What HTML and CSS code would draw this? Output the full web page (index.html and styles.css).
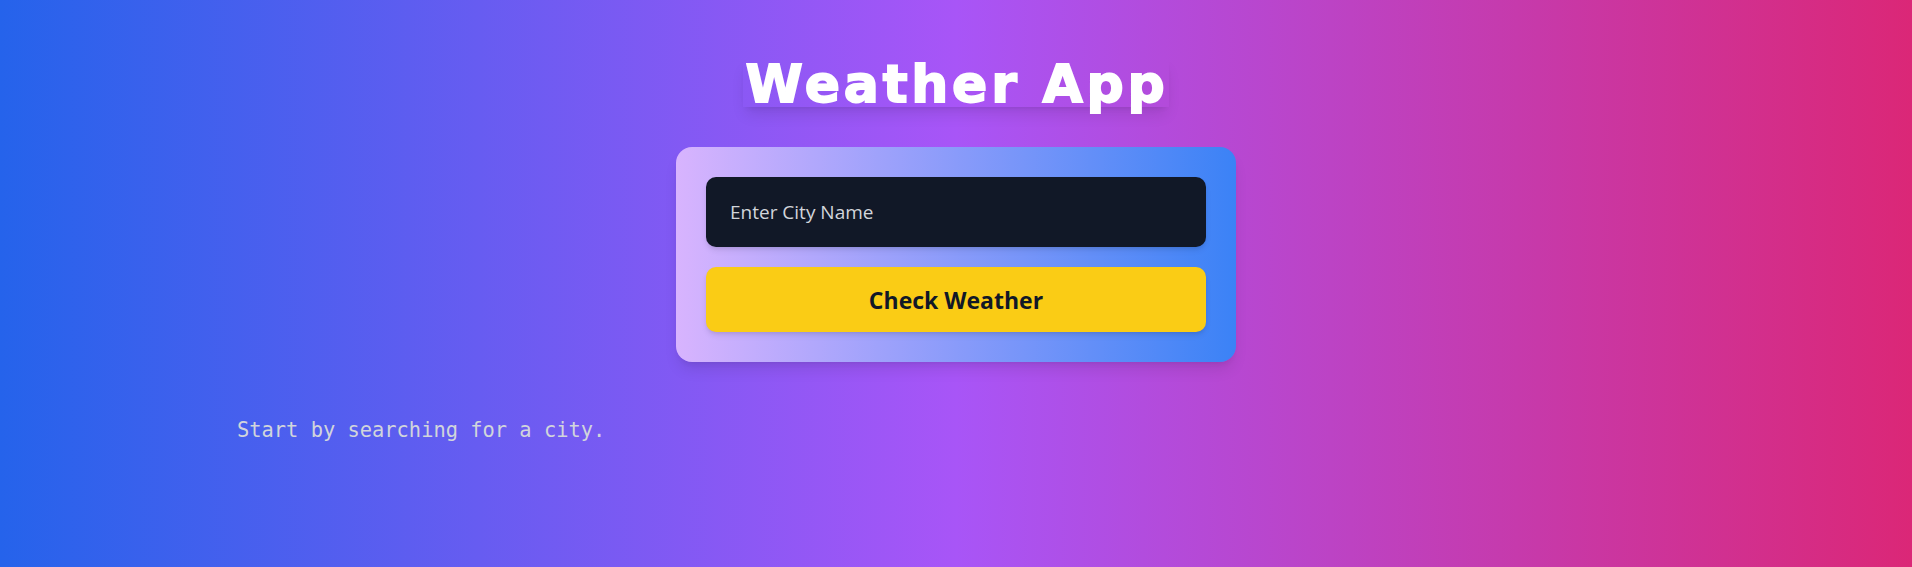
FILE: index.html
```html
<!DOCTYPE html>
<html lang="en">
<head>
<meta charset="utf-8">
<title>Weather App</title>
<link rel="stylesheet" href="styles.css">
</head>
<body>
<main class="app">
  <h1 class="title">Weather App</h1>
  <form class="card" onsubmit="return false;">
    <input class="city-input" type="text" placeholder="Enter City Name">
    <button class="check-btn" type="submit">Check Weather</button>
  </form>
  <p class="status">Start by searching for a city.</p>
</main>
</body>
</html>
```

FILE: styles.css
```css
* { box-sizing: border-box; }
html, body { margin: 0; padding: 0; }
body {
  min-height: 100vh;
  background: linear-gradient(to right, #2563eb, #a855f7, #db2777);
  font-family: "Open Sans", "Noto Sans", sans-serif;
}
.app {
  display: flex;
  flex-direction: column;
  align-items: center;
  padding-top: 58px;
}
.title {
  margin: 0 0 40px;
  padding: 3px 0 0 2px;
  font-family: "DejaVu Sans", sans-serif;
  font-weight: 700;
  font-size: 52px;
  line-height: 46px;
  letter-spacing: 3.8px;
  color: #ffffff;
  -webkit-text-stroke: 1.8px #ffffff;
  box-shadow: 0 10px 15px -3px rgba(0,0,0,0.1), 0 4px 6px -4px rgba(0,0,0,0.1);
}
.card {
  width: 560px;
  padding: 30px;
  border-radius: 16px;
  background: linear-gradient(to right, #d8b4fe, #3b82f6);
  box-shadow: 0 10px 15px -3px rgba(0,0,0,0.1), 0 4px 6px -4px rgba(0,0,0,0.1);
  display: flex;
  flex-direction: column;
  gap: 20px;
}
.city-input {
  height: 70px;
  width: 100%;
  border: none;
  outline: none;
  border-radius: 10px;
  background: #111827;
  color: #e5e7eb;
  padding: 0 24px;
  font-family: "Open Sans", sans-serif;
  font-size: 19px;
  box-shadow: 0 4px 6px -1px rgba(0,0,0,0.1), 0 2px 4px -2px rgba(0,0,0,0.1);
}
.city-input::placeholder { color: #d1d5db; opacity: 1; }
.check-btn {
  height: 65px;
  width: 100%;
  border: none;
  border-radius: 10px;
  background: #facc15;
  color: #111827;
  font-family: "Open Sans", sans-serif;
  font-weight: 700;
  font-size: 23px;
  cursor: pointer;
  box-shadow: 0 4px 6px -1px rgba(0,0,0,0.1), 0 2px 4px -2px rgba(0,0,0,0.1);
}
.status {
  align-self: flex-start;
  margin: 54px 0 0 237px;
  font-family: "DejaVu Sans Mono", "Liberation Mono", monospace;
  font-size: 20.4px;
  line-height: 28px;
  color: #d1d5db;
}
```
